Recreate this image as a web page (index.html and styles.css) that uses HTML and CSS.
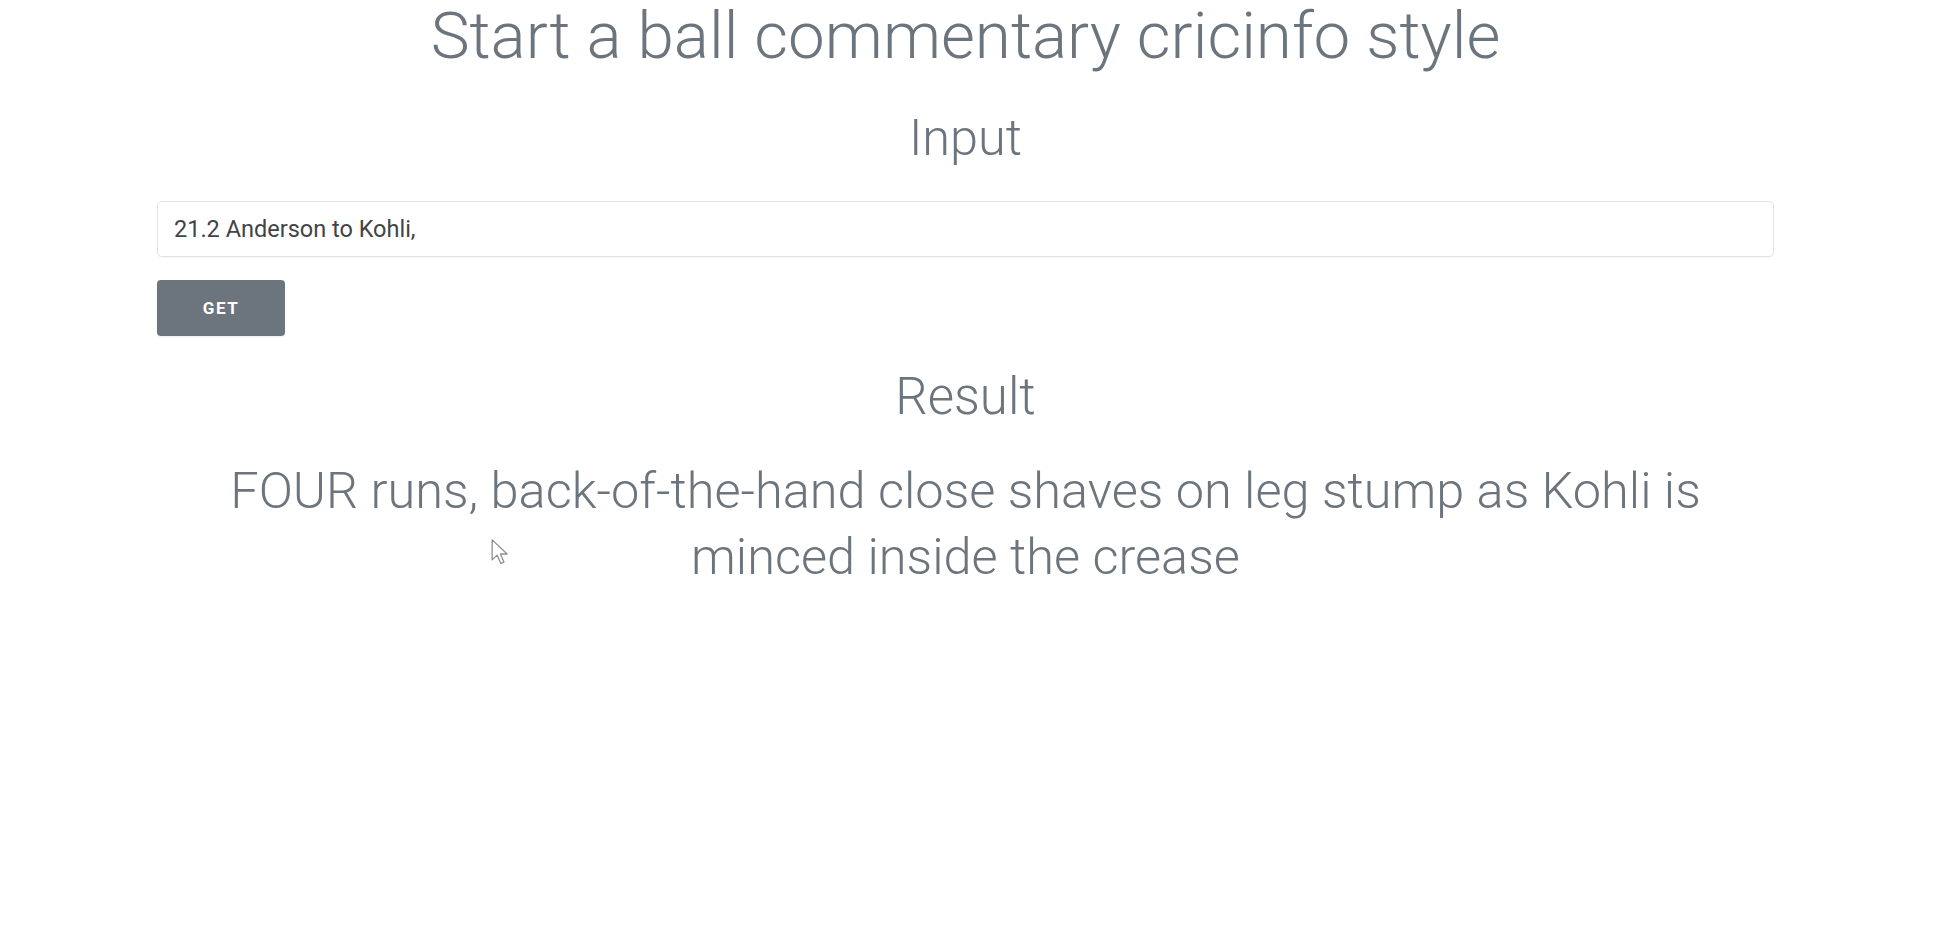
FILE: index.html
```html
<!DOCTYPE html>
<html lang="en">
<head>
  <meta charset="UTF-8">
  <meta name="viewport" content="width=device-width, initial-scale=1.0">
  <title>Ball commentary</title>
  <link rel="stylesheet" href="styles.css">
</head>
<body>
  <main class="page">
    <h1 class="title">Start a ball commentary cricinfo style</h1>

    <h2 class="section-title section-title--input">Input</h2>
    <form class="ball-form" onsubmit="return false">
      <input class="ball-input" type="text" value="21.2 Anderson to Kohli,">
      <button class="btn-get" type="submit">Get</button>
    </form>

    <h2 class="section-title section-title--result">Result</h2>
    <p class="result">FOUR runs, back-of-the-hand close shaves on leg stump as Kohli is minced inside the crease</p>
  </main>

  <!-- mouse pointer caught in the screenshot -->
  <svg class="pointer" width="20" height="30" viewBox="0 0 14 20">
    <path d="M1.5 1.5 L1.5 15.5 L5 12.2 L7.6 18 L9.8 17 L7.3 11.4 L12 11.4 Z" fill="#fff" stroke="#8f8f8f" stroke-width="0.9" stroke-linejoin="round"/>
  </svg>
</body>
</html>
```

FILE: styles.css
```css
body {
  margin: 0;
  background-color: #ffffff;
  font-family: Roboto, 'Liberation Sans', sans-serif;
  color: #6c757d;
}
.page {
  padding: 0 172px 0 157px;
  text-align: center;
}
.title {
  margin: 0;
  font-size: 65.5px;
  font-weight: 300;
  line-height: 1.1;
}
.section-title {
  margin: 0;
  font-weight: 300;
  line-height: 1.2;
}
.section-title--input {
  margin-top: 36px;
  font-size: 50.5px;
}
.section-title--result {
  margin-top: 30px;
  font-size: 51px;
}
.ball-form {
  display: flex;
  flex-direction: column;
  align-items: flex-start;
  gap: 23px;
  margin-top: 32px;
}
.ball-input {
  box-sizing: border-box;
  width: 100%;
  height: 56px;
  padding: 0 16px;
  border: 1px solid #e3e3e3;
  border-radius: 5px;
  font-family: Roboto, 'Liberation Sans', sans-serif;
  font-size: 23.5px;
  color: #404448;
  background-color: #fff;
  box-shadow: 0 1px 1px rgba(0, 0, 0, 0.03);
  outline: none;
}
.btn-get {
  width: 128px;
  height: 56px;
  border: none;
  border-radius: 4px;
  background-color: #6c757d;
  color: #fff;
  font-family: Roboto, 'Liberation Sans', sans-serif;
  font-size: 17px;
  font-weight: 700;
  letter-spacing: 1.5px;
  text-transform: uppercase;
  box-shadow: 0 1px 2px rgba(0, 0, 0, 0.08);
  cursor: pointer;
}
.result {
  margin: 31px 0 0;
  font-size: 50.5px;
  font-weight: 300;
  line-height: 66px;
}
.pointer {
  position: absolute;
  left: 490px;
  top: 537px;
}
```
